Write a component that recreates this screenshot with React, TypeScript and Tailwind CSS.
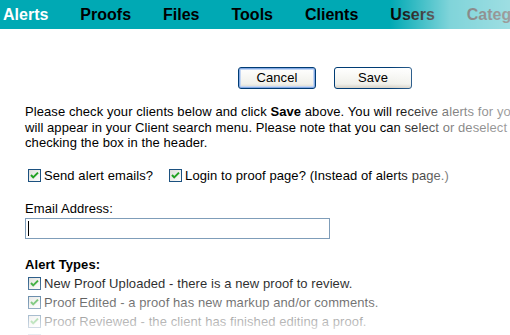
import React from 'react';

const font = "font-['Liberation_Sans',Arial,sans-serif]";

const navItems = ['Alerts', 'Proofs', 'Files', 'Tools', 'Clients', 'Users', 'Categories'];

const alertTypes = [
  'New Proof Uploaded - there is a new proof to review.',
  'Proof Edited - a proof has new markup and/or comments.',
  'Proof Reviewed - the client has finished editing a proof.',
  'Proof Approved - the client has approved a proof for printing.',
];

function XpCheckbox() {
  return (
    <svg width="13" height="13" viewBox="0 0 13 13" className="shrink-0">
      <defs>
        <linearGradient id="cbfill" x1="0" y1="0" x2="1" y2="1">
          <stop offset="0" stopColor="#dcdcd7" />
          <stop offset="1" stopColor="#ffffff" />
        </linearGradient>
      </defs>
      <rect x="0.5" y="0.5" width="12" height="12" fill="url(#cbfill)" stroke="#1c5180" />
      <path d="M3 6 L5.2 8.4 L10 3.6" fill="none" stroke="#21a121" strokeWidth="2" />
    </svg>
  );
}

function XpButton({ label, focused }: { label: string; focused?: boolean }) {
  return (
    <button
      className={`w-[78px] h-[22px] rounded-[3px] border text-[13px] text-black bg-[linear-gradient(to_bottom,#ffffff,#f0f0ea_80%,#d6d0c5)] ${
        focused ? 'border-[#003c74] shadow-[inset_0_0_0_1px_#84a9e4,inset_0_0_0_2px_#c4d7f3]' : 'border-[#003c74]'
      }`}
    >
      {label}
    </button>
  );
}

export default function App() {
  return (
    <div className={`relative w-[510px] h-[335px] overflow-hidden bg-white text-black ${font}`}>
      <nav className="h-[29px] bg-[#00a9b4] flex items-center pl-[3px] gap-[32px] whitespace-nowrap">
        {navItems.map((item, i) => (
          <span key={item} className={`text-[16px] font-bold ${i === 0 ? 'text-white' : 'text-black'}`}>
            {item}
          </span>
        ))}
      </nav>

      <div className="pl-[25px] w-[700px] tracking-[0.08px]">
        <div className="mt-[38px] flex gap-[18px] pl-[213px]">
          <XpButton label="Cancel" focused />
          <XpButton label="Save" />
        </div>

        <p className="mt-[15px] text-[13px] leading-[15.5px] whitespace-nowrap">
          Please check your clients below and click <b>Save</b> above. You will receive alerts for your checked clients. Checked clients
          <br />
          will appear in your Client search menu. Please note that you can select or deselect them all by
          <br />
          checking the box in the header.
        </p>

        <div className="mt-[17px] flex items-center text-[13px] leading-[16px] h-[16px]">
          <span className="ml-[3px] mr-[3px]"><XpCheckbox /></span>
          <span>Send alert emails?</span>
          <span className="ml-[16px] mr-[3px]"><XpCheckbox /></span>
          <span>Login to proof page? (Instead of alerts page.)</span>
        </div>

        <div className="mt-[17px] text-[13px] leading-[16px]">Email Address:</div>
        <div className="mt-[1px] w-[305px] h-[21px] border border-[#7f9db9] flex items-center pl-[2px]">
          <span className="w-px h-[15px] bg-black" />
        </div>

        <div className="mt-[18px] text-[13px] leading-[16px] font-bold">Alert Types:</div>
        <div className="mt-[2px] flex flex-col">
          {alertTypes.map((t) => (
            <div key={t} className="flex items-center h-[18.8px] text-[13px] whitespace-nowrap">
              <span className="ml-[3px] mr-[3px]"><XpCheckbox /></span>
              <span>{t}</span>
            </div>
          ))}
        </div>
      </div>

      <div className="pointer-events-none absolute inset-0 bg-[linear-gradient(to_right,rgba(255,255,255,0)_390px,rgba(255,255,255,0.5)_450px,rgba(255,255,255,0.62)_510px)]" />
      <div className="pointer-events-none absolute inset-0 bg-[linear-gradient(to_bottom,rgba(255,255,255,0)_272px,rgba(255,255,255,0.9)_335px)]" />
    </div>
  );
}
